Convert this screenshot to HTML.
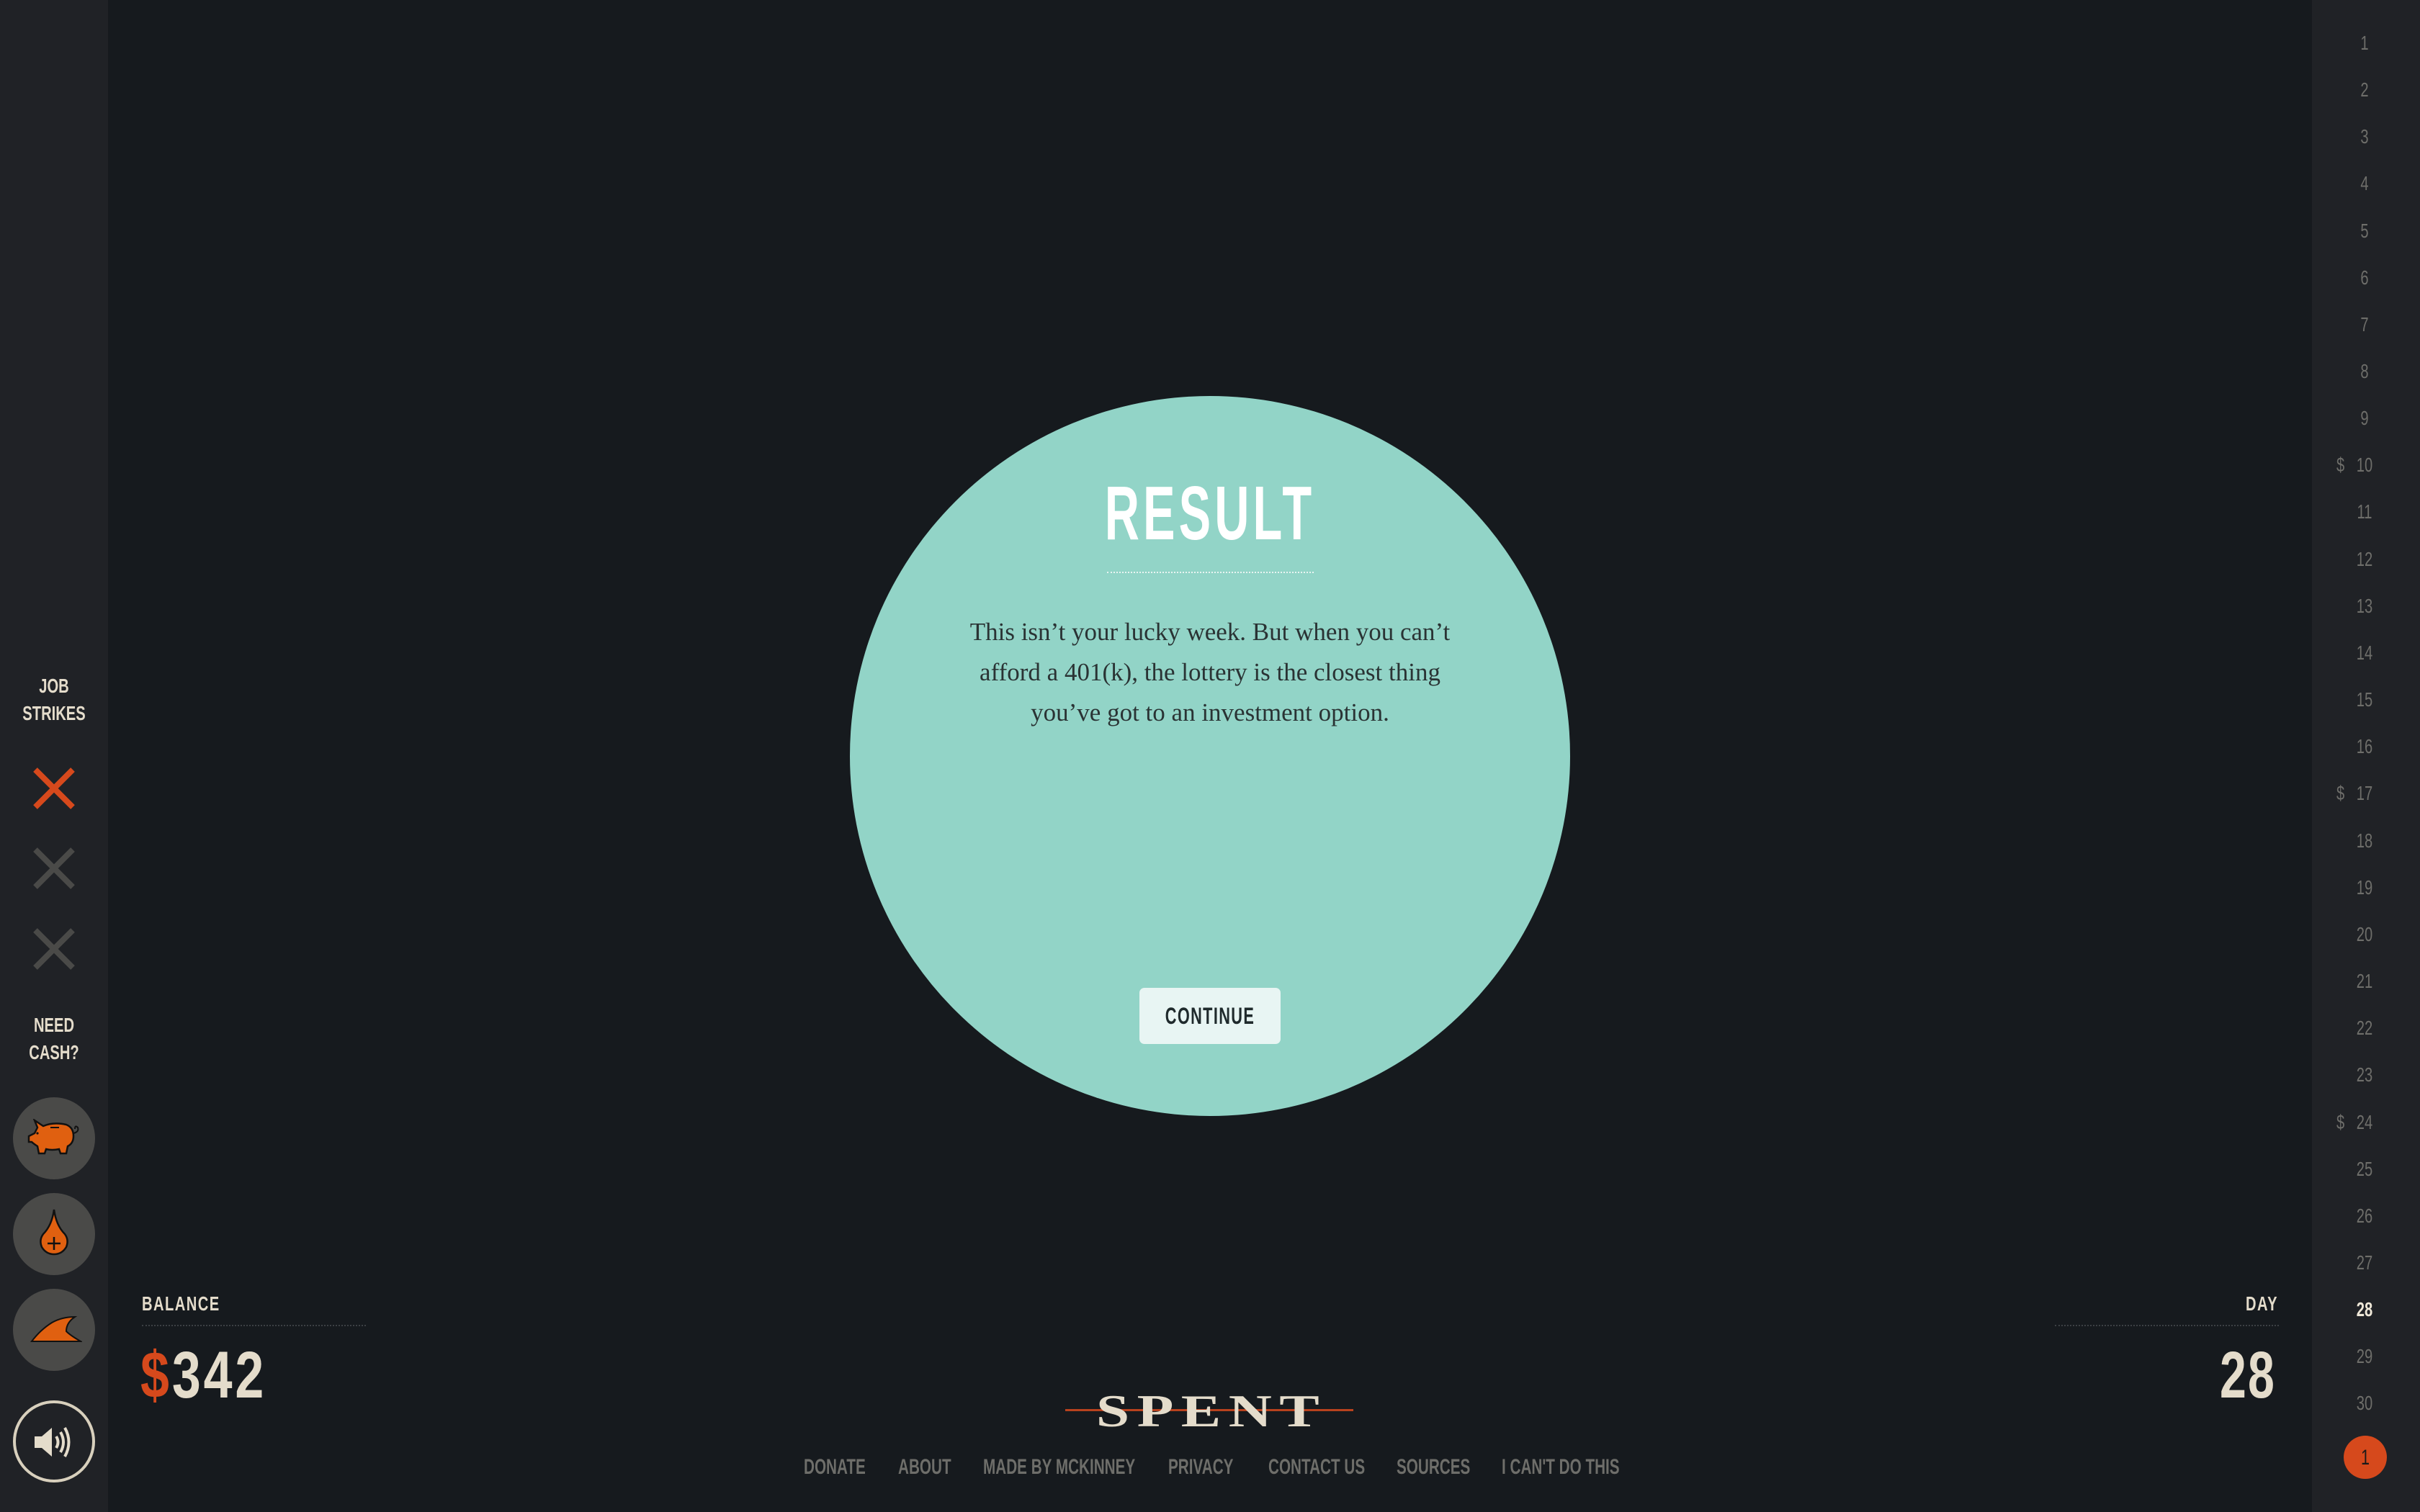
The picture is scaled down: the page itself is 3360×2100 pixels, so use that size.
<!DOCTYPE html>
<html><head><meta charset="utf-8">
<style>
*{margin:0;padding:0;box-sizing:border-box}
html,body{width:3360px;height:2100px;overflow:hidden;background:#161a1e}
body{position:relative;font-family:"Liberation Sans",sans-serif}
.a{position:absolute}
.cx{position:absolute;white-space:nowrap;transform:translateX(-50%) scaleX(.72)}
.rx{position:absolute;white-space:nowrap;transform:translateX(-100%) scaleX(.72);transform-origin:100% 0}
.lx{position:absolute;white-space:nowrap;transform:scaleX(.72);transform-origin:0 0}
#ls{left:0;top:0;width:150px;height:2100px;background:#202226}
#rs{left:3210px;top:0;width:150px;height:2100px;background:#202226}
.lbl{color:#e4dccb;font-weight:bold;font-size:28px;line-height:38px;text-align:center}
.btn{position:absolute;left:18px;width:114px;height:114px;border-radius:50%;background:#4a4a48}
.num{color:#6e6e6a;font-size:28px;line-height:30px}
.foot{color:#6e6e6a;font-size:30px;top:2021px;font-weight:bold;transform:scaleX(.69)}
</style></head><body>
<div id="ls" class="a"></div>
<div id="rs" class="a"></div>

<div class="cx lbl" style="left:75px;top:934px">JOB<br>STRIKES</div>
<svg class="a" style="left:45px;top:1065px" width="60" height="60" viewBox="0 0 60 60"><path d="M4 4L56 56M56 4L4 56" stroke="#d6491c" stroke-width="8"/></svg>
<svg class="a" style="left:45px;top:1176px" width="60" height="60" viewBox="0 0 60 60"><path d="M4 4L56 56M56 4L4 56" stroke="#4a4a48" stroke-width="8"/></svg>
<svg class="a" style="left:45px;top:1288px" width="60" height="60" viewBox="0 0 60 60"><path d="M4 4L56 56M56 4L4 56" stroke="#4a4a48" stroke-width="8"/></svg>
<div class="cx lbl" style="left:75px;top:1405px">NEED<br>CASH?</div>

<div class="btn" style="top:1524px"></div>
<svg class="a" style="left:36px;top:1554px" width="80" height="52" viewBox="0 0 80 52"><path d="M4 24L12 20L16 12L12 2L24 10Q38 4 56 8Q66 12 66 24Q66 34 58 38L56 48L48 48L46 42Q36 44 28 42L26 48L18 48L16 38Q10 34 8 32L4 32Z" fill="#e06010" stroke="#111" stroke-width="2.5"/><path d="M34 12L46 12" stroke="#111" stroke-width="2"/><path d="M66 20Q74 18 72 12Q68 8 68 14" fill="none" stroke="#111" stroke-width="2"/><circle cx="16" cy="20" r="1.6" fill="#111"/></svg>

<div class="btn" style="top:1657px"></div>
<svg class="a" style="left:52px;top:1678px" width="46" height="66" viewBox="0 0 46 66"><path d="M23 2Q26 24 38 36Q44 44 40 54Q34 64 23 64Q12 64 6 54Q2 44 8 36Q20 24 23 2Z" fill="#e06010" stroke="#111" stroke-width="2.5"/><path d="M23 40V58M14 49H32" stroke="#111" stroke-width="2.5"/></svg>

<div class="btn" style="top:1790px"></div>
<svg class="a" style="left:42px;top:1825px" width="72" height="40" viewBox="0 0 72 40"><path d="M2 38Q14 22 30 12Q44 4 62 4Q50 12 50 24Q56 30 70 38Z" fill="#e06010" stroke="#111" stroke-width="2"/></svg>

<div class="a" style="left:18px;top:1945px;width:114px;height:114px;border-radius:50%;border:4px solid #d8d0bd"></div>
<svg class="a" style="left:46px;top:1978px" width="60" height="50" viewBox="0 0 60 50"><path d="M2 17H12L26 5V45L12 33H2Z" fill="#e4dccb"/><path d="M32 17Q37 25 32 33M38 11Q46 25 38 39M44 5Q55 25 44 45" fill="none" stroke="#e4dccb" stroke-width="4"/></svg>

<!-- circle -->
<div class="a" style="left:1180px;top:550px;width:1000px;height:1000px;border-radius:50%;background:#92d4c7"></div>
<div class="cx" style="left:1680px;top:658px;color:#fff;font-weight:bold;font-size:106px;letter-spacing:8px;line-height:110px;transform:translateX(-50%) scaleX(.63)">RESULT</div>
<div class="a" style="left:1537px;top:794px;width:287px;height:2px;border-top:2px dotted #e8f4f1"></div>
<div class="a" style="left:1280px;top:850px;width:800px;text-align:center;font-family:'Liberation Serif',serif;font-size:35px;line-height:56px;color:#2a3334">This isn’t your lucky week. But when you can’t<br>afford a 401(k), the lottery is the closest thing<br>you’ve got to an investment option.</div>
<div class="a" style="left:1582px;top:1372px;width:196px;height:78px;background:#e8f5f3;border-radius:7px"></div>
<div class="cx" style="left:1680px;top:1393px;color:#1f2a2c;font-weight:bold;font-size:32px;letter-spacing:2px;transform:translateX(-50%) scaleX(.68)">CONTINUE</div>

<!-- balance -->
<div class="lx" style="left:197px;top:1795px;color:#e4dccb;font-weight:bold;font-size:28px;letter-spacing:2px">BALANCE</div>
<div class="a" style="left:197px;top:1840px;width:311px;border-top:2px dotted #3c4044"></div>
<div class="lx" style="left:195px;top:1858px;font-weight:bold;font-size:92px;color:#e4dccb;letter-spacing:5px;transform:scaleX(.78)"><span style="color:#d6491c">$</span>342</div>

<div class="rx" style="left:3163px;top:1795px;color:#e4dccb;font-weight:bold;font-size:28px;letter-spacing:2px">DAY</div>
<div class="a" style="left:2853px;top:1840px;width:311px;border-top:2px dotted #3c4044"></div>
<div class="rx" style="left:3160px;top:1858px;font-weight:bold;font-size:92px;color:#e4dccb;letter-spacing:3px">28</div>

<!-- logo -->
<div class="a" style="left:1479px;top:1957px;width:400px;height:3px;background:#b8421e"></div>
<div class="cx" style="left:1682px;top:1920px;font-family:'Liberation Serif',serif;font-weight:bold;font-size:64px;line-height:80px;color:#e4dccb;letter-spacing:8px;transform:translateX(-50%) scaleX(1.3)">SPENT</div>

<!-- footer -->
<div class="lx foot" style="left:1116px">DONATE</div>
<div class="lx foot" style="left:1247px">ABOUT</div>
<div class="lx foot" style="left:1365px">MADE BY MCKINNEY</div>
<div class="lx foot" style="left:1622px">PRIVACY</div>
<div class="lx foot" style="left:1761px">CONTACT US</div>
<div class="lx foot" style="left:1939px">SOURCES</div>
<div class="lx foot" style="left:2085px">I CAN'T DO THIS</div>

<!-- days -->
<div class="cx num" style="left:3283px;top:45px">1</div>
<div class="cx num" style="left:3283px;top:110px">2</div>
<div class="cx num" style="left:3283px;top:175px">3</div>
<div class="cx num" style="left:3283px;top:240px">4</div>
<div class="cx num" style="left:3283px;top:306px">5</div>
<div class="cx num" style="left:3283px;top:371px">6</div>
<div class="cx num" style="left:3283px;top:436px">7</div>
<div class="cx num" style="left:3283px;top:501px">8</div>
<div class="cx num" style="left:3283px;top:566px">9</div>
<div class="cx num" style="left:3283px;top:631px">10</div>
<div class="lx num" style="left:3244px;top:631px">$</div>
<div class="cx num" style="left:3283px;top:696px">11</div>
<div class="cx num" style="left:3283px;top:762px">12</div>
<div class="cx num" style="left:3283px;top:827px">13</div>
<div class="cx num" style="left:3283px;top:892px">14</div>
<div class="cx num" style="left:3283px;top:957px">15</div>
<div class="cx num" style="left:3283px;top:1022px">16</div>
<div class="cx num" style="left:3283px;top:1087px">17</div>
<div class="lx num" style="left:3244px;top:1087px">$</div>
<div class="cx num" style="left:3283px;top:1153px">18</div>
<div class="cx num" style="left:3283px;top:1218px">19</div>
<div class="cx num" style="left:3283px;top:1283px">20</div>
<div class="cx num" style="left:3283px;top:1348px">21</div>
<div class="cx num" style="left:3283px;top:1413px">22</div>
<div class="cx num" style="left:3283px;top:1478px">23</div>
<div class="cx num" style="left:3283px;top:1544px">24</div>
<div class="lx num" style="left:3244px;top:1544px">$</div>
<div class="cx num" style="left:3283px;top:1609px">25</div>
<div class="cx num" style="left:3283px;top:1674px">26</div>
<div class="cx num" style="left:3283px;top:1739px">27</div>
<div class="cx num" style="left:3283px;top:1804px;color:#efe8d8;font-weight:bold">28</div>
<div class="cx num" style="left:3283px;top:1869px">29</div>
<div class="cx num" style="left:3283px;top:1934px">30</div>
<div class="a" style="left:3254px;top:1994px;width:60px;height:60px;border-radius:50%;background:#d6491c"></div>
<div class="cx" style="left:3284px;top:2008px;font-size:30px;color:#1a1a1a">1</div>
</body></html>
